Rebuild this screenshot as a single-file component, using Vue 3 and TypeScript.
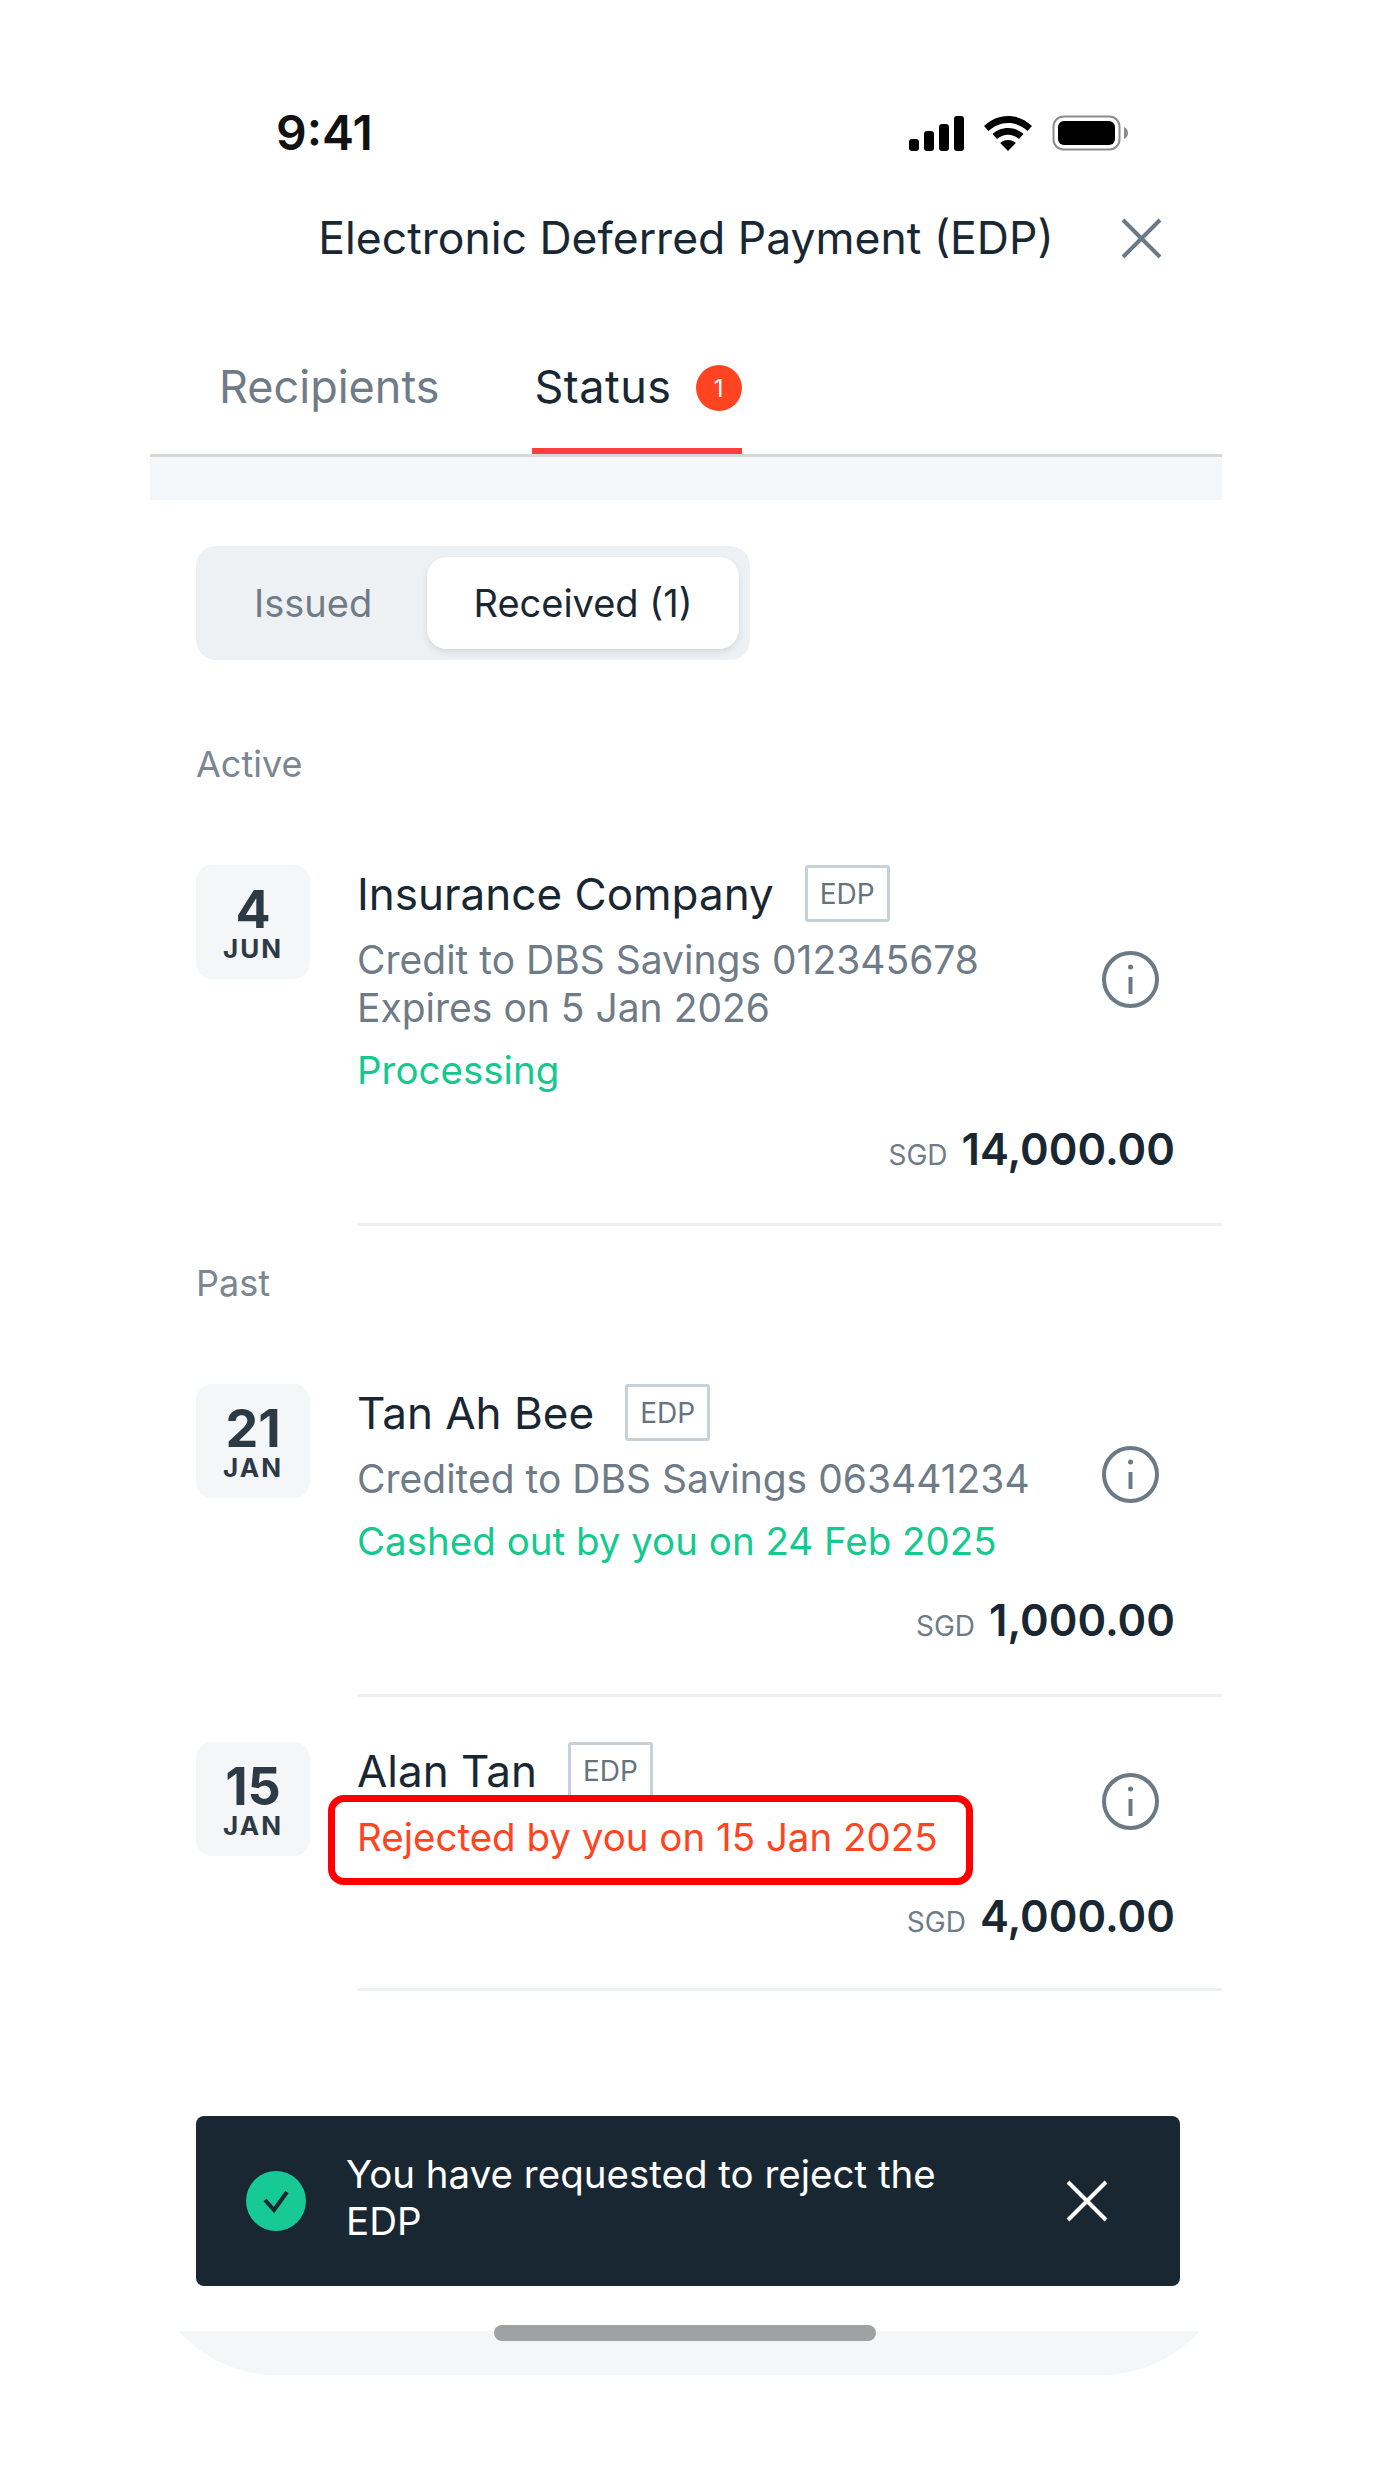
<script setup lang="ts">
interface Payment {
  day: string
  month: string
  name: string
  lines: string[]
  status: string
  tone: 'ok' | 'bad'
  amount: string
  flagged?: boolean
}

const active: Payment[] = [
  {
    day: '4',
    month: 'JUN',
    name: 'Insurance Company',
    lines: ['Credit to DBS Savings 012345678', 'Expires on 5 Jan 2026'],
    status: 'Processing',
    tone: 'ok',
    amount: '14,000.00'
  }
]

const past: Payment[] = [
  {
    day: '21',
    month: 'JAN',
    name: 'Tan Ah Bee',
    lines: ['Credited to DBS Savings 063441234'],
    status: 'Cashed out by you on 24 Feb 2025',
    tone: 'ok',
    amount: '1,000.00'
  },
  {
    day: '15',
    month: 'JAN',
    name: 'Alan Tan',
    lines: [],
    status: 'Rejected by you on 15 Jan 2025',
    tone: 'bad',
    amount: '4,000.00',
    flagged: true
  }
]

const sections = [
  { title: 'Active', items: active },
  { title: 'Past', items: past }
]
</script>

<template>
  <div class="phone">
    <div class="status-bar">
      <span class="clock">9:41</span>
      <div class="sys-icons">
        <svg width="55" height="35" viewBox="0 0 55 35">
          <rect x="0" y="23" width="10" height="12" rx="3" />
          <rect x="15" y="15" width="10" height="20" rx="3" />
          <rect x="30" y="8" width="10" height="27" rx="3" />
          <rect x="45" y="0" width="10" height="35" rx="3" />
        </svg>
        <svg width="48" height="35" viewBox="0 0 48 35">
          <path d="M24 0C15 0 7 3.500 0 10l4.500 5C10 10 16.500 7 24 7s14 3 19.500 8l4.500-5C41 3.500 33 0 24 0z" />
          <path d="M24 12c-6 0-11.500 2.300-15.500 6l4.500 5c3-2.700 6.800-4.300 11-4.300s8 1.600 11 4.300l4.500-5c-4-3.700-9.500-6-15.500-6z" />
          <path d="M24 24c-3 0-5.800 1.100-7.800 3L24 35l7.800-8c-2-1.900-4.800-3-7.800-3z" />
        </svg>
        <svg width="76" height="36" viewBox="0 0 76 36">
          <rect x="1.500" y="1.500" width="66" height="33" rx="10" fill="none" stroke="#8c8c8c" stroke-width="2" />
          <rect x="6" y="6" width="57" height="24" rx="6" />
          <path d="M72 12c2.500 1 4 3.300 4 6s-1.500 5-4 6z" fill="#8c8c8c" />
        </svg>
      </div>
    </div>

    <header class="title-row">
      <h1>Electronic Deferred Payment (EDP)</h1>
      <svg class="close" width="41" height="41" viewBox="0 0 41 41">
        <path d="M2 2l37 37M39 2L2 39" />
      </svg>
    </header>

    <nav class="tabs">
      <span class="tab">Recipients</span>
      <span class="tab tab-on">
        Status
        <span class="count">1</span>
      </span>
    </nav>
    <div class="band"></div>

    <main class="content">
      <div class="segment">
        <span class="seg-item">Issued</span>
        <span class="seg-item seg-on">Received (1)</span>
      </div>

      <section v-for="section in sections" :key="section.title" class="group">
        <h2>{{ section.title }}</h2>
        <article v-for="item in section.items" :key="item.name" class="row">
          <div class="date">
            <strong>{{ item.day }}</strong>
            <span>{{ item.month }}</span>
          </div>
          <div class="row-body">
            <div class="row-top">
              <div class="details">
                <div class="name-line">
                  <span class="name">{{ item.name }}</span>
                  <span class="tag">EDP</span>
                </div>
                <div v-if="item.lines.length" class="sub">
                  <p v-for="line in item.lines" :key="line">{{ line }}</p>
                </div>
                <p class="state" :class="item.tone">
                  {{ item.status }}
                  <span v-if="item.flagged" class="flag"></span>
                </p>
              </div>
              <svg class="info" width="57" height="57" viewBox="0 0 57 57">
                <circle cx="28.500" cy="28.500" r="26.500" />
                <path d="M28.500 26v17" />
                <circle class="dot" cx="28.500" cy="16" r="2.500" />
              </svg>
            </div>
            <div class="amount">
              <span class="cur">SGD</span>
              <span class="val">{{ item.amount }}</span>
            </div>
          </div>
        </article>
      </section>

      <div class="toast">
        <svg class="tick" width="60" height="60" viewBox="0 0 60 60">
          <circle cx="30" cy="30" r="30" fill="#17c995" />
          <path d="M19 29l9 10 13-18" fill="none" stroke="#192733" stroke-width="4" />
        </svg>
        <p>You have requested to reject the EDP</p>
        <svg class="toast-x" width="42" height="42" viewBox="0 0 42 42">
          <path d="M2 2l38 38M40 2L2 40" />
        </svg>
      </div>
    </main>

    <footer class="bottom">
      <span class="home"></span>
    </footer>
  </div>
</template>

<style scoped>
.phone {
  width: 1072px;
  margin-left: 150px;
  font-family: Inter, "Liberation Sans", sans-serif;
  color: #192733;
  background: #fff;
}

.status-bar {
  display: flex;
  justify-content: space-between;
  align-items: center;
  height: 36px;
  padding: 115px 94px 0 126px;
}

.clock {
  font-size: 48px;
  font-weight: 600;
  color: #111;
  line-height: 36px;
}

.sys-icons {
  display: flex;
  align-items: center;
  gap: 20px;
}

.title-row {
  position: relative;
  display: flex;
  justify-content: center;
  align-items: center;
  height: 60px;
  margin-top: 57px;
}

.title-row h1 {
  margin: 0;
  font-size: 44.500px;
  font-weight: 400;
}

.close {
  position: absolute;
  left: 971px;
  top: 10px;
}

.close path {
  fill: none;
  stroke: #6b7a85;
  stroke-width: 4;
}

.tabs {
  display: flex;
  gap: 93px;
  height: 127px;
  margin-top: 62px;
  padding-left: 69px;
  box-sizing: border-box;
  border-bottom: 3px solid #d6d9dc;
}

.tab {
  display: flex;
  align-items: flex-start;
  gap: 24px;
  padding-top: 29px;
  font-size: 45px;
  color: #6f7c87;
}

.tab-on {
  height: 124px;
  box-sizing: border-box;
  padding-left: 2px;
  border-bottom: 6px solid #ff3d3d;
  color: #192733;
  letter-spacing: 0.500px;
}

.count {
  display: flex;
  justify-content: center;
  align-items: center;
  width: 46px;
  height: 46px;
  margin-top: 6px;
  border-radius: 50%;
  background: #ff4422;
  color: #fff;
  font-size: 24px;
  letter-spacing: 0;
}

.band {
  height: 43px;
  background: #f5f6f8;
}

.content {
  padding: 46px 0 0 46px;
}

.segment {
  display: inline-flex;
  align-items: center;
  box-sizing: border-box;
  width: 554px;
  height: 114px;
  padding: 0 11px 0 58px;
  border-radius: 20px;
  background: #eef1f4;
  font-size: 38px;
  color: #6f7c87;
}

.seg-item {
  width: 173px;
}

.seg-on {
  flex: 1;
  text-align: center;
  line-height: 92px;
  border-radius: 20px;
  background: #fff;
  color: #192733;
  box-shadow: 0 3px 6px rgba(25, 39, 51, 0.12);
}

.group h2 {
  margin: 37px 0 81px;
  font-size: 36px;
  line-height: 40px;
  font-weight: 400;
  color: #7a8792;
}

.group:first-of-type h2 {
  margin-top: 84px;
}

.row {
  display: flex;
  gap: 47px;
}

.row + .row {
  margin-top: 45px;
}

.date {
  display: flex;
  flex-direction: column;
  align-items: center;
  flex: none;
  box-sizing: border-box;
  width: 114px;
  height: 114px;
  padding-top: 20px;
  border-radius: 16px;
  background: #f4f6f8;
  color: #2c3a45;
}

.date strong {
  font-size: 52px;
  line-height: 50px;
  font-weight: 700;
}

.date span {
  font-size: 26px;
  line-height: 28px;
  font-weight: 700;
  letter-spacing: 2px;
}

.row-body {
  flex: 1;
  border-bottom: 3px solid #eef0f2;
  padding-bottom: 41px;
}

.row + .row .row-body {
  padding-bottom: 39px;
}

.row-top {
  display: flex;
  justify-content: space-between;
  align-items: center;
  padding-right: 63px;
}

.name-line {
  display: flex;
  align-items: center;
  gap: 31px;
  height: 57px;
}

.name {
  font-size: 44px;
}

.tag {
  display: flex;
  justify-content: center;
  align-items: center;
  box-sizing: border-box;
  width: 85px;
  height: 57px;
  border: 3px solid #c9d1d8;
  border-radius: 3px;
  font-size: 28px;
  color: #66737e;
}

.sub {
  margin-top: 14px;
  font-size: 39px;
  line-height: 48px;
  color: #6f7c87;
}

.sub p,
.state {
  margin: 0;
}

.state {
  position: relative;
  margin-top: 14px;
  font-size: 38.500px;
  line-height: 48px;
  white-space: nowrap;
}

.ok {
  color: #14c98e;
}

.bad {
  color: #ff4422;
}

/* annotation box drawn over the rejected line */
.flag {
  position: absolute;
  left: -29px;
  top: -18px;
  width: 645px;
  height: 90px;
  box-sizing: border-box;
  border: 7px solid #f00;
  border-radius: 16px;
}

.info circle {
  fill: none;
  stroke: #6b7a85;
  stroke-width: 4;
}

.info path {
  fill: none;
  stroke: #6b7a85;
  stroke-width: 4;
}

.info .dot {
  fill: #6b7a85;
  stroke: none;
}

.amount {
  display: flex;
  justify-content: flex-end;
  align-items: baseline;
  gap: 14px;
  margin-top: 28px;
  padding-right: 47px;
  line-height: 54px;
}

.cur {
  font-size: 28px;
  color: #6f7c87;
}

.val {
  font-size: 43.500px;
  font-weight: 600;
}

.toast {
  display: flex;
  align-items: center;
  width: 984px;
  height: 170px;
  box-sizing: border-box;
  margin-top: 125px;
  padding: 0 72px 0 50px;
  border-radius: 8px;
  background: #192733;
  color: #fff;
}

.toast p {
  flex: 1;
  margin: -6px 80px 0 40px;
  font-size: 38.500px;
  line-height: 47px;
}

.toast-x path {
  fill: none;
  stroke: #fff;
  stroke-width: 4;
}

/* bottom of the phone: lower part of a large rounded body */
.bottom {
  position: relative;
  width: 1086px;
  height: 44px;
  margin: 45px 0 99px -4px;
}

.bottom::before {
  content: "";
  position: absolute;
  inset: -216px 0 0;
  border-radius: 130px;
  background: #f5f6f8;
  clip-path: inset(216px 0 0);
}

.home {
  position: absolute;
  left: 348px;
  top: -6px;
  width: 382px;
  height: 16px;
  border-radius: 8px;
  background: #a0a1a3;
}

.tick {
  flex: none;
}
</style>

<style>
html,
body {
  margin: 0;
  background: #fff;
}
</style>
